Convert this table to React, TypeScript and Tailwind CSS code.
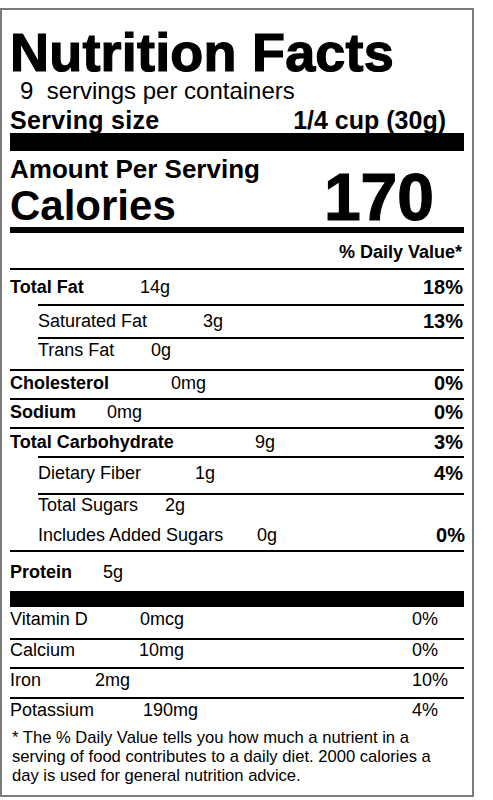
import React from "react";

type RowProps = {
  name: string;
  nameW: number;
  amount: string;
  pct?: string;
  bold?: boolean;
  indent?: boolean;
  line?: boolean;
  h: string;
  pb?: string;
};

function Row({ name, nameW, amount, pct, bold, indent, line = true, h, pb = "" }: RowProps) {
  return (
    <div
      className={`flex items-center ${h} ${pb} ${indent ? "ml-[28px]" : ""} ${
        line ? "border-t-2 border-black" : ""
      }`}
    >
      <span
        className={`text-[18px] leading-none shrink-0 ${bold ? "font-bold" : ""}`}
        style={{ width: nameW }}
      >
        {name}
      </span>
      <span className="text-[18px] leading-none">{amount}</span>
      <span className="flex-1" />
      {pct && <span className="text-[20px] leading-none font-bold pr-[1px]">{pct}</span>}
    </div>
  );
}

function VitRow({ name, nameW, amount, pct, line = true, h }: { name: string; nameW: number; amount: string; pct: string; line?: boolean; h: string }) {
  return (
    <div className={`flex items-center pb-[7px] ${h} ${line ? "border-t-2 border-black" : ""}`}>
      <span className="text-[18px] leading-none shrink-0" style={{ width: nameW }}>
        {name}
      </span>
      <span className="text-[18px] leading-none">{amount}</span>
      <span className="flex-1" />
      <span className="text-[18px] leading-none w-[52px]">{pct}</span>
    </div>
  );
}

export default function App() {
  return (
    <div className="bg-white min-h-screen pt-[8px] font-['Liberation_Sans',Arial,sans-serif] text-black">
      <div className="w-[474px] h-[789px] border-2 border-[#7c7c7c] px-[8px]">
        <h1 className="mt-[15px] h-[52px] text-[54px] leading-none font-bold tracking-[0.2px] [-webkit-text-stroke:1.2px_black]">
          Nutrition Facts
        </h1>
        <p className="mt-[2px] h-[22px] pl-[10px] text-[24px] leading-none whitespace-pre">9  servings per containers</p>
        <div className="mt-[7px] flex justify-between text-[25px] leading-none font-bold pr-[18px]">
          <span className="tracking-[0.3px]">Serving size</span>
          <span>1/4 cup (30g)</span>
        </div>
        <div className="h-[18px] bg-black" />

        <div className="flex justify-between items-end">
          <div>
            <div className="mt-[5px] text-[26px] leading-none font-bold">Amount Per Serving</div>
            <div className="mt-[3px] text-[42px] leading-none font-bold">Calories</div>
          </div>
          <div className="text-[66px] leading-none font-bold mr-[30px] mb-[-3px] [-webkit-text-stroke:1.2px_black]">
            170
          </div>
        </div>
        <div className="h-[6px] bg-black" />

        <div className="mt-[10px] mb-[7px] text-right text-[18px] leading-none font-bold pr-[2px]">
          % Daily Value*
        </div>

        <Row name="Total Fat" nameW={130} amount="14g" pct="18%" bold h="h-[36px]" />
        <Row name="Saturated Fat" nameW={165} amount="3g" pct="13%" indent h="h-[33px]" pb="pb-[2px]" />
        <Row name="Trans Fat" nameW={113} amount="0g" indent h="h-[32px]" pb="pb-[8px]" />
        <Row name="Cholesterol" nameW={161} amount="0mg" pct="0%" bold h="h-[29px]" pb="pb-[3px]" />
        <Row name="Sodium" nameW={97} amount="0mg" pct="0%" bold h="h-[29px]" pb="pb-[3px]" />
        <Row name="Total Carbohydrate" nameW={245} amount="9g" pct="3%" bold h="h-[29px]" pb="pb-[2px]" />
        <Row name="Dietary Fiber" nameW={157} amount="1g" pct="4%" indent h="h-[37px]" pb="pb-[6px]" />

        <div className="ml-[28px] border-t-2 border-black h-[57px] pt-[1px]">
          <div className="flex items-center h-[18px]">
            <span className="text-[18px] leading-none w-[127px] shrink-0">Total Sugars</span>
            <span className="text-[18px] leading-none">2g</span>
          </div>
          <div className="flex items-center h-[20px] mt-[11px]">
            <span className="text-[18px] leading-none w-[219px] shrink-0">Includes Added Sugars</span>
            <span className="text-[18px] leading-none">0g</span>
            <span className="flex-1" />
            <span className="text-[20px] leading-none font-bold mr-[-1px]">0%</span>
          </div>
        </div>

        <Row name="Protein" nameW={93} amount="5g" bold h="h-[41px]" />
        <div className="h-[16px] bg-black" />

        <VitRow name="Vitamin D" nameW={130} amount="0mcg" pct="0%" line={false} h="h-[31px]" />
        <VitRow name="Calcium" nameW={129} amount="10mg" pct="0%" h="h-[29px]" />
        <VitRow name="Iron" nameW={85} amount="2mg" pct="10%" h="h-[30px]" />
        <div className="flex items-center h-[24px] border-t-2 border-black">
          <span className="text-[18px] leading-none w-[133px] shrink-0">Potassium</span>
          <span className="text-[18px] leading-none">190mg</span>
          <span className="flex-1" />
          <span className="text-[18px] leading-none w-[52px]">4%</span>
        </div>

        <p className="mt-[7px] pl-[2px] text-[16.6px] leading-[19px] whitespace-nowrap">
          * The % Daily Value tells you how much a nutrient in a
          <br />
          serving of food contributes to a daily diet. 2000 calories a
          <br />
          day is used for general nutrition advice.
        </p>
      </div>
    </div>
  );
}
